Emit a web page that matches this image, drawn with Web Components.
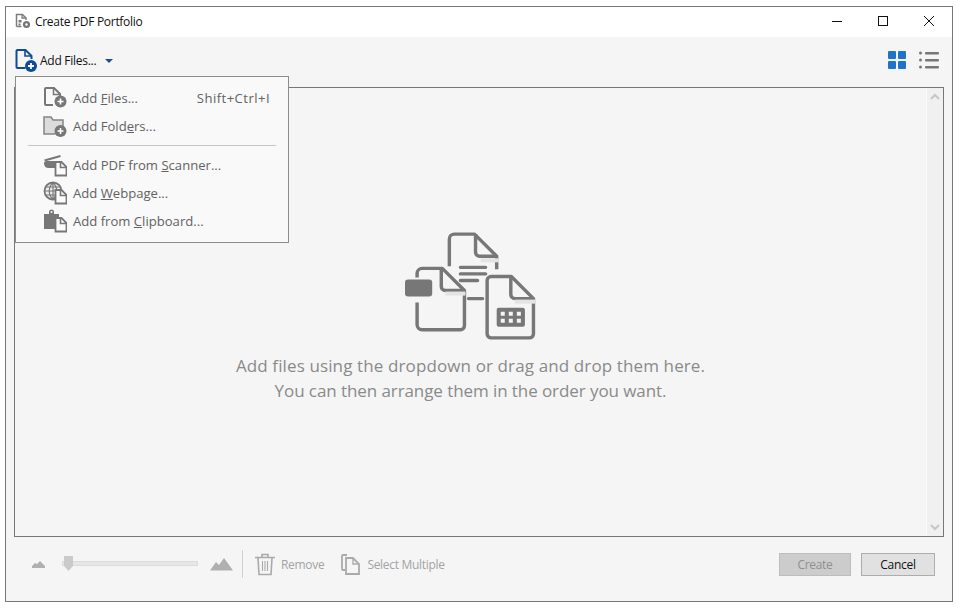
<!DOCTYPE html>
<html>
<head>
<meta charset="utf-8">
<title>Create PDF Portfolio</title>
<style>
  html, body { margin: 0; height: 100%; background: #fff; }
  body { font-family: "Open Sans", "Noto Sans", sans-serif; font-size: 12px; }
</style>
</head>
<body>
<portfolio-window>
  <title-bar slot="title">Create PDF Portfolio</title-bar>
  <add-toolbar slot="toolbar"></add-toolbar>
  <add-menu slot="menu"></add-menu>
  <drop-panel slot="panel">
    <div style="letter-spacing:.12px">Add files using the dropdown or drag and drop them here.</div>
    <div style="letter-spacing:-.08px">You can then arrange them in the order you want.</div>
  </drop-panel>
  <bottom-bar slot="footer"></bottom-bar>
</portfolio-window>

<script>
class PortfolioWindow extends HTMLElement {
  connectedCallback() {
    this.attachShadow({ mode: 'open' });
    this.shadowRoot.innerHTML = `
      <style>
        :host {
          display: flex;
          flex-direction: column;
          position: relative;
          box-sizing: border-box;
          width: 948px;
          height: 596px;
          margin: 6px 0 0 5px;
          border: 1px solid #777;
          background: #f5f5f5;
        }
        .menu { position: absolute; left: 9px; top: 69px; z-index: 5; }
      </style>
      <slot name="title"></slot>
      <slot name="toolbar"></slot>
      <slot name="panel"></slot>
      <slot name="footer"></slot>
      <div class="menu"><slot name="menu"></slot></div>
    `;
  }
}

class TitleBar extends HTMLElement {
  connectedCallback() {
    this.attachShadow({ mode: 'open' });
    this.shadowRoot.innerHTML = `
      <style>
        :host {
          display: flex;
          align-items: center;
          height: 30px;
          flex: none;
          background: #fff;
          padding-left: 9px;
          color: #111;
          font-size: 12px;
          letter-spacing: -.3px;
        }
        .logo { width: 16px; height: 16px; margin: -2px 4px 0 0; }
        .text { flex: 1; margin-top: -2px; }
        .ctl { display: block; width: 46px; height: 30px; }
      </style>
      <svg class="logo" viewBox="0 0 16 16" fill="none">
        <path d="M1.500 13.500V1.500h6l3.500 3.500v2" stroke="#7c7c7c" stroke-width="1.5"/>
        <path d="M7 1.500V5h4" stroke="#7c7c7c" stroke-width="1.300"/>
        <path d="M1.500 13.500h5" stroke="#7c7c7c" stroke-width="1.500"/>
        <rect x="3.500" y="7" width="3" height="2.500" fill="#777"/>
        <rect x="3.500" y="10.500" width="2" height="2" fill="#777"/>
        <circle cx="11.500" cy="11.500" r="3.600" fill="#777"/>
        <circle cx="11.500" cy="11.500" r="1.200" fill="#fff"/>
      </svg>
      <span class="text"><slot></slot></span>
      <svg class="ctl" viewBox="0 0 46 30"><path d="M18 14.500h10" stroke="#111" fill="none"/></svg>
      <svg class="ctl" viewBox="0 0 46 30"><rect x="18.500" y="9.500" width="9" height="9" stroke="#111" fill="none"/></svg>
      <svg class="ctl" viewBox="0 0 46 30"><path d="M18 9l10 10M28 9L18 19" stroke="#111" fill="none"/></svg>
    `;
  }
}

class AddToolbar extends HTMLElement {
  connectedCallback() {
    this.attachShadow({ mode: 'open' });
    this.shadowRoot.innerHTML = `
      <style>
        :host {
          display: flex;
          align-items: center;
          box-sizing: border-box;
          height: 50px;
          flex: none;
          padding: 0 13px 4px 9px;
          color: #111;
          font-size: 12px;
          letter-spacing: -.27px;
        }
        .add { width: 24px; height: 24px; }
        .label { margin-left: 1px; }
        .caret { width: 0; height: 0; margin: 2px 0 0 9px; border: 4px solid transparent; border-top: 4px solid #1d4f8f; border-bottom: 0; }
        .space { flex: 1; }
        .grid { display: grid; grid-template-columns: 8px 8px; grid-auto-rows: 8px; gap: 2px; margin-right: 13px; }
        .grid i { background: #1f74c9; border-radius: 1px; }
        .list { width: 20px; height: 18px; display: block; }
      </style>
      <svg class="add" viewBox="0 0 24 24" fill="none">
        <path d="M10.500 20H2.500a1 1 0 0 1-1-1V3a1 1 0 0 1 1-1h8l6 6v3" stroke="#0f4c97" stroke-width="2"/>
        <path d="M10 2v6h7" stroke="#0f4c97" stroke-width="1.600"/>
        <circle cx="16" cy="18" r="6" fill="#0f4c97"/>
        <path d="M13 18h6M16 15v6" stroke="#fff" stroke-width="1.800"/>
      </svg>
      <span class="label">Add Files...</span>
      <span class="caret"></span>
      <span class="space"></span>
      <div class="grid"><i></i><i></i><i></i><i></i></div>
      <svg class="list" viewBox="0 0 20 18" fill="#777">
        <circle cx="1.500" cy="2" r="1.500"/><rect x="6" y="1" width="14" height="2.400" rx="1"/>
        <circle cx="1.500" cy="9" r="1.500"/><rect x="6" y="8" width="14" height="2.400" rx="1"/>
        <circle cx="1.500" cy="16" r="1.500"/><rect x="6" y="15" width="14" height="2.400" rx="1"/>
      </svg>
    `;
  }
}

class MenuItem extends HTMLElement {
  connectedCallback() {
    this.attachShadow({ mode: 'open' });
    this.shadowRoot.innerHTML = `
      <style>
        :host {
          display: flex;
          align-items: center;
          height: 28px;
          padding: 0 18px 0 27px;
          color: #626262;
          font-size: 13.1px;
        }
        .icon { width: 24px; height: 24px; margin-right: 6px; display: flex; }
        .label { flex: 1; }
        .key { letter-spacing: .45px; }
      </style>
      <span class="icon"><slot name="icon"></slot></span>
      <span class="label"><slot></slot></span>
      <span class="key"><slot name="key"></slot></span>
    `;
  }
}

// little doc with folded corner, shared by the last three entries
const miniDoc = `<path d="M12.500 9h6l5 5v8.500h-11z" fill="#fbfbfb" stroke="#777" stroke-width="1.800"/><path d="M17.500 9v5.500h6" fill="none" stroke="#777" stroke-width="1.600"/>`;
const plusDot = (y) => `<circle cx="17.500" cy="${y}" r="6" fill="#777"/><path d="M14.500 ${y}h6M17.500 ${y - 3}v6" stroke="#fff" stroke-width="1.600"/>`;

class AddMenu extends HTMLElement {
  connectedCallback() {
    this.attachShadow({ mode: 'open' });
    this.shadowRoot.innerHTML = `
      <style>
        :host {
          display: block;
          box-sizing: border-box;
          width: 274px;
          height: 167px;
          padding: 7px 0;
          background: #f9f9f9;
          border: 1px solid #8d8d8d;
        }
        hr { border: 0; height: 1px; background: #c6c6c6; margin: 5px 12px; }
        svg { width: 24px; height: 24px; display: block; }
      </style>
      <menu-item>
        <svg slot="icon" viewBox="0 0 24 24" fill="none">
          <path d="M10 19H3a1 1 0 0 1-1-1V3a1 1 0 0 1 1-1h8l6 6v3" stroke="#777" stroke-width="2"/>
          <path d="M10.500 2v6.500H17" stroke="#777" stroke-width="1.500"/>${plusDot(15.5)}
        </svg>
        Add <u>F</u>iles...
        <span slot="key">Shift+Ctrl+I</span>
      </menu-item>
      <menu-item>
        <svg slot="icon" viewBox="0 0 24 24" fill="none">
          <path d="M1 20V3h7l2 3h10v6l-8 8z" fill="#dcdcdc" stroke="#858585" stroke-width="1.500"/>${plusDot(17)}
        </svg>
        Add Fold<u>e</u>rs...
      </menu-item>
      <hr>
      <menu-item>
        <svg slot="icon" viewBox="0 0 24 24" fill="none">
          <path d="M1.500 7.500l16-4.500" stroke="#777" stroke-width="2"/>
          <path d="M1 10c0-1 1-2 3-2h8v7H5c-3 0-4-3-4-5z" fill="#777"/>${miniDoc}
        </svg>
        Add PDF from <u>S</u>canner...
      </menu-item>
      <menu-item>
        <svg slot="icon" viewBox="0 0 24 24" fill="none">
          <circle cx="10" cy="10" r="8.500" fill="#ededed" stroke="#777" stroke-width="1.800"/>
          <path d="M1.500 10h17M3 6h14M3 14h14M10 1.500v17M10 1.500c-5 5-5 12 0 17M10 1.500c5 5 5 12 0 17" stroke="#777" stroke-width="1.200"/>${miniDoc}
        </svg>
        Add <u>W</u>ebpage...
      </menu-item>
      <menu-item>
        <svg slot="icon" viewBox="0 0 24 24" fill="none">
          <path d="M1 5h5V3a2.500 2.500 0 0 1 5 0v2h5v4h-4v11H1z" fill="#777"/>
          <circle cx="8.500" cy="3" r="1" fill="#fbfbfb"/>${miniDoc}
        </svg>
        Add from <u>C</u>lipboard...
      </menu-item>
    `;
  }
}

class DropPanel extends HTMLElement {
  connectedCallback() {
    this.attachShadow({ mode: 'open' });
    this.shadowRoot.innerHTML = `
      <style>
        :host {
          display: flex;
          height: 450px;
          flex: none;
          box-sizing: border-box;
          margin: 0 8px;
          border: 1px solid #777;
          background: #f5f5f5;
        }
        .body {
          flex: 1;
          display: flex;
          flex-direction: column;
          align-items: center;
          padding-top: 143px;
          color: #8a8a8a;
          font-size: 17px;
          line-height: 25px;
          text-align: center;
        }
        .art { width: 133px; height: 111px; display: block; margin: 0 1px 11px 0; }
        .bar {
          width: 16px;
          flex: none;
          background: #f0f0f0;
          border-left: 1px solid #fafafa;
          display: flex;
          flex-direction: column;
          justify-content: space-between;
          align-items: center;
          padding: 5px 0;
        }
        .bar svg { width: 10px; height: 8px; display: block; }
      </style>
      <div class="body">
        <svg class="art" viewBox="404 232 132 110" fill="none" stroke="#777" stroke-width="3.400" stroke-linejoin="round">
          <path d="M449 267V240a5 5 0 0 1 5-5h20l22 22v13" />
          <path d="M475 235v18a4 4 0 0 0 4 4h17" />
          <path d="M480 259h18v4h-18z" fill="#e4e4e4" stroke="none"/>
          <path d="M460 268h25M460 274.500h25M460 281h17M468 299h14" stroke-linecap="round"/>
          <path d="M417 278V274a5 5 0 0 1 5-5h20l22 22v35a4 4 0 0 1-4 4h-38a5 5 0 0 1-5-5V303" />
          <path d="M441 269v18a4 4 0 0 0 4 4h18" />
          <path d="M445 292h20v4h-20z" fill="#e4e4e4" stroke="none"/>
          <rect x="405" y="280" width="27" height="17" rx="3" fill="#777" stroke="none"/>
          <path d="M486.500 281a4 4 0 0 1 4-4h20l22 22v35a4 4 0 0 1-4 4h-38a4 4 0 0 1-4-4z" fill="#f5f5f5"/>
          <path d="M510 277v18a4 4 0 0 0 4 4h18" />
          <path d="M514 300h20v4h-20z" fill="#e4e4e4" stroke="none"/>
          <rect x="496" y="308" width="28" height="19" rx="2" fill="#777" stroke="none"/>
          <path d="M500 312h4v4h-4zM508 312h4v4h-4zM516 312h4v4h-4zM500 319h4v4h-4zM508 319h4v4h-4zM516 319h4v4h-4z" fill="#f5f5f5" stroke="none"/>
        </svg>
        <div><slot></slot></div>
      </div>
      <div class="bar">
        <svg viewBox="0 0 10 8"><path d="M1 6l4-4 4 4" fill="none" stroke="#c6c6c6" stroke-width="2"/></svg>
        <svg viewBox="0 0 10 8"><path d="M1 2l4 4 4-4" fill="none" stroke="#c6c6c6" stroke-width="2"/></svg>
      </div>
    `;
  }
}

class BottomBar extends HTMLElement {
  connectedCallback() {
    this.attachShadow({ mode: 'open' });
    this.shadowRoot.innerHTML = `
      <style>
        :host {
          display: flex;
          align-items: center;
          flex: 1;
          padding: 0 17px 10px 26px;
          color: #a3a3a3;
          font-size: 12px;
          letter-spacing: -.3px;
        }
        svg { display: block; flex: none; }
        .track {
          position: relative;
          box-sizing: border-box;
          width: 136px;
          height: 5px;
          margin: -2px 12px 0 16px;
          background: #e4e7e6;
          border: 1px solid #dcdcdc;
        }
        .thumb { position: absolute; left: 0; top: -6px; }
        .sep { width: 1px; height: 28px; background: #cfcfcf; margin: 0 12px 0 9px; }
        .remove { margin: 0 17px 0 6px; }
        .multi { margin-left: 7px; }
        .space { flex: 1; }
        button {
          box-sizing: border-box;
          height: 23px;
          font: inherit;
          letter-spacing: inherit;
          padding: 0;
          border: 1px solid #adadad;
        }
        .create { width: 72px; background: #cccccc; border-color: #bdbdbd; color: #8f8f8f; margin-right: 10px; }
        .cancel { width: 74px; background: #e1e1e1; color: #111; }
      </style>
      <svg width="14" height="8" viewBox="0 0 14 8" fill="#b0b0b0"><path d="M0 8V6l3-3 2 1 3-3 3 3 2 2v2z"/></svg>
      <div class="track">
        <svg class="thumb" width="13" height="15" viewBox="0 0 13 15"><path d="M1 0h9v10l-4.500 5L1 10z" fill="#cacaca"/></svg>
      </div>
      <svg width="23" height="13" viewBox="0 0 23 13" fill="#b0b0b0"><path d="M0 12.500L6 4l3 3 5-7 9 12.500z"/></svg>
      <div class="sep"></div>
      <svg width="20" height="23" viewBox="0 0 20 23" fill="none" stroke="#aaa" stroke-width="1.600">
        <path d="M0 4.500h20M7 4V1.500h6V4M3 5l1 16.500h12L17 5"/>
        <path d="M7.500 8v10M10 8v10M12.500 8v10" stroke-width="1.100"/>
      </svg>
      <span class="remove">Remove</span>
      <svg width="19" height="21" viewBox="0 0 19 21" fill="none" stroke="#aaa" stroke-width="1.800">
        <path d="M6 1H2a1 1 0 0 0-1 1v13a1 1 0 0 0 1 1h2"/>
        <path d="M5 4h7l6 6v10H5z"/><path d="M12 4v6h6" stroke-width="1.400"/>
      </svg>
      <span class="multi">Select Multiple</span>
      <span class="space"></span>
      <button class="create">Create</button>
      <button class="cancel">Cancel</button>
    `;
  }
}

customElements.define('portfolio-window', PortfolioWindow);
customElements.define('title-bar', TitleBar);
customElements.define('add-toolbar', AddToolbar);
customElements.define('menu-item', MenuItem);
customElements.define('add-menu', AddMenu);
customElements.define('drop-panel', DropPanel);
customElements.define('bottom-bar', BottomBar);
</script>
</body>
</html>
